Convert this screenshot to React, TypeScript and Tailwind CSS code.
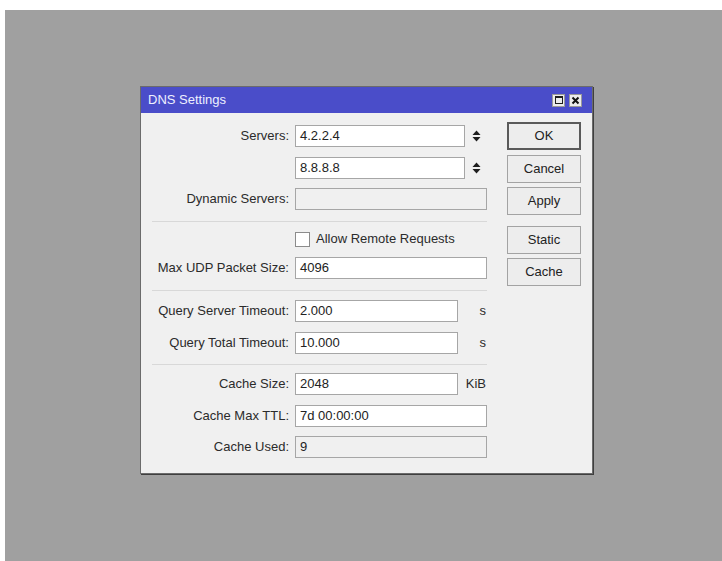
import React from "react";

const font = "font-['Liberation_Sans',Arial,sans-serif]";

function Field({
  label,
  children,
  className = "",
}: {
  label?: string;
  children?: React.ReactNode;
  className?: string;
}) {
  return (
    <div className={`flex h-[22px] items-center ${className}`}>
      <div className="w-[148px] whitespace-nowrap text-right text-[#2b2b2b]">{label}</div>
      <div className="ml-[6px] flex h-full items-center">{children}</div>
    </div>
  );
}

function Box({
  value,
  width,
  readOnly = false,
}: {
  value: string;
  width: string;
  readOnly?: boolean;
}) {
  return (
    <div
      className={`h-[22px] ${width} border border-[#a6a6a6] pl-[4px] leading-[20px] text-[#222] ${
        readOnly ? "bg-[#f0f0f0]" : "bg-white"
      }`}
    >
      {value}
    </div>
  );
}

function Spinner() {
  return (
    <div className="flex w-[22px] justify-center">
      <svg width="9" height="14" viewBox="0 0 9 14">
        <polygon points="0.5,6 4.5,1.5 8.5,6" fill="#1e1e1e" />
        <polygon points="0.5,8 4.5,12.5 8.5,8" fill="#1e1e1e" />
      </svg>
    </div>
  );
}

function Unit({ text }: { text: string }) {
  return <div className="w-[28px] text-right text-[#2b2b2b]">{text}</div>;
}

function Separator({ className = "" }: { className?: string }) {
  return <div className={`ml-[11px] h-px w-[335px] bg-[#d8d8d8] ${className}`} />;
}

function Button({ label, primary = false, className = "" }: { label: string; primary?: boolean; className?: string }) {
  return (
    <div
      className={`flex h-[28px] w-[74px] items-center justify-center bg-[#ededed] text-[#222] ${
        primary ? "border-2 border-[#5a5a5a]" : "border border-[#a3a3a3]"
      } ${className}`}
    >
      {label}
    </div>
  );
}

export default function App() {
  return (
    <div className={`flex h-[561px] w-[722px] bg-white pl-[5px] pt-[10px] ${font} text-[13px]`}>
      <div className="flex-1 bg-[#a0a0a0] pl-[135px] pt-[76px]">
        <div className="flex h-[388px] w-[453px] flex-col border border-[#6b6b6b] bg-[#f0f0f0] shadow-[1px_1px_0_#3f3f3f]">
          {/* title bar */}
          <div className="flex h-[26px] shrink-0 items-center bg-[#4a4dc9] pl-[7px] pr-[10px]">
            <span className="flex-1 text-[#eef0ff]">DNS Settings</span>
            <div className="flex items-center gap-[4px]">
              <div className="flex h-[13px] w-[13px] items-center justify-center border border-[#9a9a9a] bg-[#ececec]">
                <div className="h-[8px] w-[8px] border border-t-2 border-[#1e1e1e]" />
              </div>
              <div className="flex h-[13px] w-[13px] items-center justify-center border border-[#9a9a9a] bg-[#ececec]">
                <svg width="9" height="9" viewBox="0 0 9 9">
                  <path d="M1.5 1.5 L7.5 7.5 M7.5 1.5 L1.5 7.5" stroke="#111" strokeWidth="2" />
                </svg>
              </div>
            </div>
          </div>

          {/* body */}
          <div className="flex flex-1">
            <div className="flex w-[346px] flex-col pt-[12px]">
              <Field label="Servers:">
                <Box value="4.2.2.4" width="w-[170px]" />
                <Spinner />
              </Field>
              <Field className="mt-[10px]">
                <Box value="8.8.8.8" width="w-[170px]" />
                <Spinner />
              </Field>
              <Field label="Dynamic Servers:" className="mt-[9px]">
                <Box value="" width="w-[192px]" readOnly />
              </Field>

              <Separator className="mt-[11px]" />

              <Field className="mt-[6px]">
                <div className="h-[15px] w-[15px] border border-[#8c8c8c] bg-white" />
                <span className="ml-[6px] text-[#2b2b2b]">Allow Remote Requests</span>
              </Field>
              <Field label="Max UDP Packet Size:" className="mt-[7px]">
                <Box value="4096" width="w-[192px]" />
              </Field>

              <Separator className="mt-[11px]" />

              <Field label="Query Server Timeout:" className="mt-[9px]">
                <Box value="2.000" width="w-[163px]" />
                <Unit text="s" />
              </Field>
              <Field label="Query Total Timeout:" className="mt-[10px]">
                <Box value="10.000" width="w-[163px]" />
                <Unit text="s" />
              </Field>

              <Separator className="mt-[10px]" />

              <Field label="Cache Size:" className="mt-[8px]">
                <Box value="2048" width="w-[163px]" />
                <Unit text="KiB" />
              </Field>
              <Field label="Cache Max TTL:" className="mt-[10px]">
                <Box value="7d 00:00:00" width="w-[192px]" />
              </Field>
              <Field label="Cache Used:" className="mt-[9px]">
                <Box value="9" width="w-[192px]" readOnly />
              </Field>
            </div>

            <div className="ml-[20px] flex flex-col pt-[9px]">
              <Button label="OK" primary />
              <Button label="Cancel" className="mt-[5px]" />
              <Button label="Apply" className="mt-[4px]" />
              <Button label="Static" className="mt-[11px]" />
              <Button label="Cache" className="mt-[4px]" />
            </div>
          </div>
        </div>
      </div>
    </div>
  );
}
